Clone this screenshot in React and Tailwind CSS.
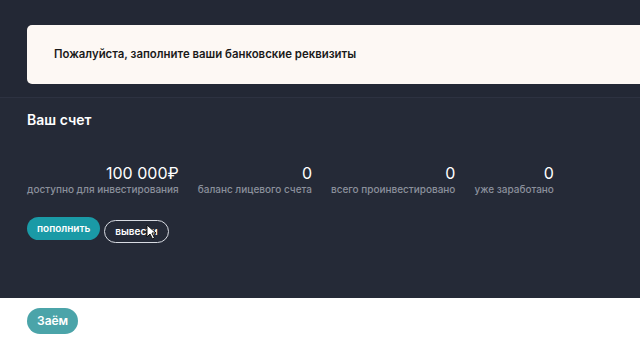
import React from "react";

const stats = [
  { value: "100 000₽", label: "доступно для инвестирования" },
  { value: "0", label: "баланс лицевого счета" },
  { value: "0", label: "всего проинвестировано" },
  { value: "0", label: "уже заработано" },
];

function Cursor() {
  return (
    <svg
      width="11"
      height="16"
      viewBox="0 0 11 16"
      className="absolute left-[42px] top-[7px] pointer-events-none"
    >
      <path
        d="M1 1 L1 13 L4 10 L6.5 15 L8.5 14 L6 9 L10 9 Z"
        fill="#fff"
        stroke="#111"
        strokeWidth="1"
        strokeLinejoin="round"
      />
    </svg>
  );
}

export default function App() {
  return (
    <div
      className="w-[640px] h-[360px] overflow-hidden bg-white"
      style={{ fontFamily: "Inter, 'Noto Sans', sans-serif" }}
    >
      {/* Notice */}
      <div className="h-[98px] bg-[#232835] border-b border-[#2d3241] pt-[25px] pl-[27px]">
        <div className="h-[59px] bg-[#fdf8f4] rounded-l-[5px] flex items-center pl-[27px]">
          <span className="text-[11.4px] font-semibold text-[#1a1a1a]">
            Пожалуйста, заполните ваши банковские реквизиты
          </span>
        </div>
      </div>

      {/* Account */}
      <div className="h-[200px] bg-[#252a37] px-[27px] pt-[13px]">
        <h2 className="text-[14px] font-semibold text-white leading-[18px]">Ваш счет</h2>

        <div className="flex gap-[19px] mt-[35px]">
          {stats.map((s) => (
            <div key={s.label} className="flex flex-col items-end">
              <span className="text-[16px] text-white leading-[19px]">{s.value}</span>
              <span className="text-[10px] font-medium text-[#8b909c] leading-[13px]">{s.label}</span>
            </div>
          ))}
        </div>

        <div className="flex gap-[4px] mt-[21px]">
          <button className="h-[23px] px-[10px] rounded-full bg-[#1a9aa6] text-white text-[10px] font-semibold">
            пополнить
          </button>
          <div className="relative">
            <button className="h-[23px] px-[10px] rounded-full border border-[#d8dbe2] text-white text-[10px] font-semibold">
              вывести
            </button>
            <Cursor />
          </div>
        </div>
      </div>

      {/* Loan */}
      <div className="px-[27px] pt-[9px]">
        <button className="h-[26px] px-[10px] rounded-full bg-[#4ba4a9] text-white text-[12px] font-semibold">
          Заём
        </button>
      </div>
    </div>
  );
}
